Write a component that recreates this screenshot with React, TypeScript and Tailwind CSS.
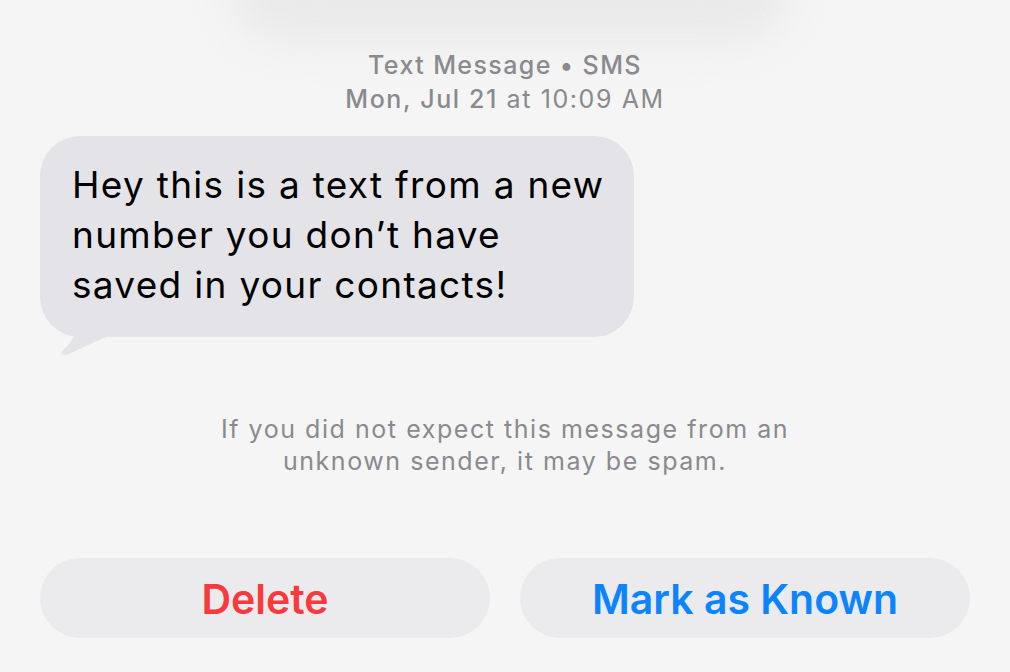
import React from 'react';

const FONT = "font-['Inter','Noto_Sans',sans-serif]";

function Bubble({ children }: { children: React.ReactNode }) {
  return (
    <div className="relative w-fit">
      <div className="rounded-[40px] bg-[#e3e3e8] pl-[32px] pr-[30px] pt-[24px] pb-[27px] text-[37px] leading-[50px] text-black tracking-[1.3px]">
        {children}
      </div>
      <svg className="absolute left-[18px] top-[calc(100%-34px)]" width="60" height="52" viewBox="0 0 60 52">
        <path d="M24 0 C24 18 20 34 4 48 C2 51 4 52 8 52 C28 44 40 36 60 30 L60 0 Z" fill="#e3e3e8" />
      </svg>
    </div>
  );
}

export default function App() {
  return (
    <div className={`relative w-[1010px] h-[672px] overflow-hidden bg-[#f5f5f5] ${FONT}`}>
      <div className="absolute left-[230px] top-[-70px] w-[560px] h-[110px] rounded-full bg-[#e9e9e9] blur-[22px]" />

      <div className="relative flex flex-col">
        <div className="pt-[48px] flex flex-col items-center text-[25px] leading-[34px] text-[#8a8a8e] tracking-[1.4px]">
          <div className="font-medium">Text Message • SMS</div>
          <div className="tracking-[1.6px]">
            <span className="font-medium">Mon, Jul 21</span> at 10:09 AM
          </div>
        </div>

        <div className="pl-[40px] pt-[20px]">
          <Bubble>
            Hey this is a text from a new
            <br />
            number you don’t have
            <br />
            saved in your contacts!
          </Bubble>
        </div>

        <div className="pt-[76px] text-center text-[25px] leading-[32px] text-[#8a8a8e] tracking-[1.55px]">
          If you did not expect this message from an
          <br />
          unknown sender, it may be spam.
        </div>

        <div className="px-[40px] pt-[81px] grid grid-cols-2 gap-[30px]">
          <button className="h-[80px] pt-[4px] rounded-[40px] bg-[#ebebed] text-[41px] font-semibold text-[#f83a3d]">
            Delete
          </button>
          <button className="h-[80px] pt-[4px] rounded-[40px] bg-[#ebebed] text-[41px] font-semibold text-[#0b84fe]">
            Mark as Known
          </button>
        </div>
      </div>
    </div>
  );
}
